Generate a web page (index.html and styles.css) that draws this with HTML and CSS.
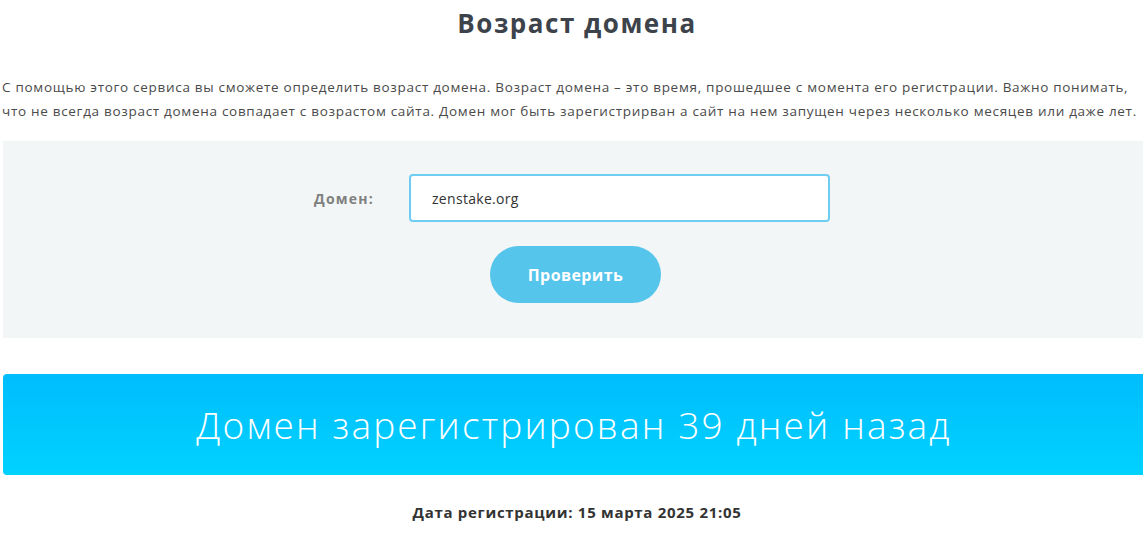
FILE: index.html
```html
<!DOCTYPE html>
<html lang="ru">
<head>
<meta charset="utf-8">
<title>Возраст домена</title>
<link rel="stylesheet" href="styles.css">
</head>
<body>
<main class="page">
  <h1 class="title">Возраст домена</h1>
  <p class="intro">С помощью этого сервиса вы сможете определить возраст домена. Возраст домена – это время, прошедшее с момента его регистрации. Важно понимать, что не всегда возраст домена совпадает с возрастом сайта. Домен мог быть зарегистрирван а сайт на нем запущен через несколько месяцев или даже лет.</p>
  <form class="panel">
    <div class="row">
      <label class="label" for="domain">Домен:</label>
      <input class="input" id="domain" type="text" value="zenstake.org">
    </div>
    <button class="btn" type="button">Проверить</button>
  </form>
  <div class="result">Домен зарегистрирован 39 дней назад</div>
  <p class="date">Дата регистрации: 15 марта 2025 21:05</p>
</main>
</body>
</html>
```
FILE: styles.css
```css
html, body {
  margin: 0;
  padding: 0;
  overflow: hidden;
  background: #fff;
}
.page {
  width: 1148px;
  margin-left: 3px;
  font-family: "Open Sans", sans-serif;
  color: #444;
}
.title {
  margin: 0;
  padding-top: 5px;
  height: 36px;
  line-height: 36px;
  text-align: center;
  font-weight: 700;
  font-size: 26px;
  letter-spacing: 1.5px;
  color: #3d434b;
}
.intro {
  margin: 34px 0 0 -1px;
  font-size: 13.5px;
  letter-spacing: 0.7px;
  line-height: 24px;
  color: #4a4a4a;
  width: 1141px;
}
.panel {
  margin-top: 18px;
  background: #f3f6f7;
  height: 197px;
  box-sizing: border-box;
  padding-top: 33px;
  display: flex;
  flex-direction: column;
  align-items: center;
}
.row {
  display: flex;
  align-items: center;
  margin-right: 10px;
}
.label {
  width: 95px;
  font-size: 14px;
  letter-spacing: 1.2px;
  font-weight: 700;
  color: #808080;
}
.input {
  width: 421px;
  height: 48px;
  box-sizing: border-box;
  border: 2px solid #6fcdf1;
  border-radius: 4px;
  padding: 0 0 0 21px;
  font-family: "Open Sans", sans-serif;
  font-size: 14px;
  letter-spacing: 0.3px;
  color: #333;
  background: #fff;
  outline: none;
}
.btn {
  margin-top: 24px;
  margin-right: 3px;
  width: 171px;
  height: 57px;
  border: none;
  border-radius: 29px;
  background: #56c5ec;
  color: #fff;
  font-family: "Open Sans", sans-serif;
  font-weight: 700;
  font-size: 16px;
  letter-spacing: 0.4px;
}
.result {
  margin-top: 36px;
  height: 101px;
  border-radius: 4px;
  background: linear-gradient(#00bdfd, #00d2ff);
  color: #fff;
  display: flex;
  align-items: center;
  justify-content: center;
  font-weight: 300;
  font-size: 37px;
  letter-spacing: 2.15px;
  padding-right: 6px;
}
.date {
  margin: 27px 0 0;
  text-align: center;
  font-weight: 700;
  font-size: 15px;
  letter-spacing: 0.7px;
  color: #333;
}
```
